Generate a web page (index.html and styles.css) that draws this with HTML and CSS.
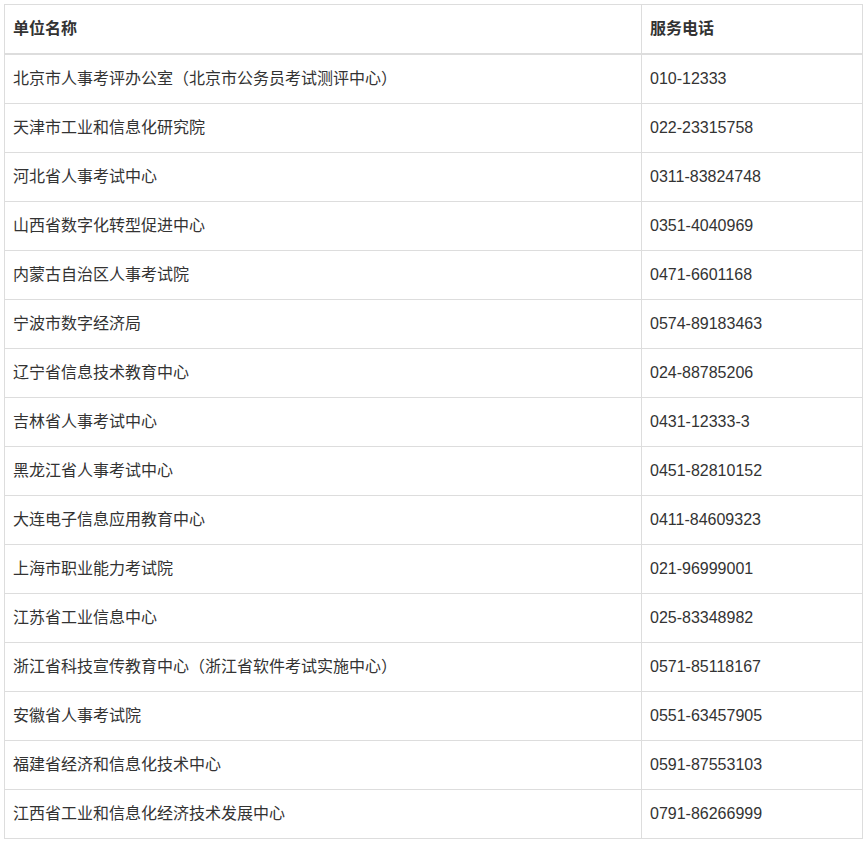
FILE: index.html
```html
<!DOCTYPE html>
<html lang="zh-CN">
<head>
<meta charset="utf-8">
<title>服务电话</title>
<link rel="stylesheet" href="styles.css">
</head>
<body>
<div class="wrap">
<table class="contacts">
<thead>
<tr><th class="name">单位名称</th><th class="phone">服务电话</th></tr>
</thead>
<tbody>
<tr><td>北京市人事考评办公室（北京市公务员考试测评中心）</td><td>010-12333</td></tr>
<tr><td>天津市工业和信息化研究院</td><td>022-23315758</td></tr>
<tr><td>河北省人事考试中心</td><td>0311-83824748</td></tr>
<tr><td>山西省数字化转型促进中心</td><td>0351-4040969</td></tr>
<tr><td>内蒙古自治区人事考试院</td><td>0471-6601168</td></tr>
<tr><td>宁波市数字经济局</td><td>0574-89183463</td></tr>
<tr><td>辽宁省信息技术教育中心</td><td>024-88785206</td></tr>
<tr><td>吉林省人事考试中心</td><td>0431-12333-3</td></tr>
<tr><td>黑龙江省人事考试中心</td><td>0451-82810152</td></tr>
<tr><td>大连电子信息应用教育中心</td><td>0411-84609323</td></tr>
<tr><td>上海市职业能力考试院</td><td>021-96999001</td></tr>
<tr><td>江苏省工业信息中心</td><td>025-83348982</td></tr>
<tr><td>浙江省科技宣传教育中心（浙江省软件考试实施中心）</td><td>0571-85118167</td></tr>
<tr><td>安徽省人事考试院</td><td>0551-63457905</td></tr>
<tr><td>福建省经济和信息化技术中心</td><td>0591-87553103</td></tr>
<tr><td>江西省工业和信息化经济技术发展中心</td><td>0791-86266999</td></tr>
</tbody>
</table>
</div>
</body>
</html>
```
FILE: styles.css
```css
html, body {
  margin: 0;
  padding: 0;
  background: #fff;
}
.wrap {
  padding: 4px 0 0 4px;
}
.contacts {
  width: 859px;
  border-collapse: collapse;
  border: 1px solid #ddd;
  font-family: "Liberation Sans", "Noto Sans CJK SC", sans-serif;
  font-size: 16px;
  color: #333;
  table-layout: fixed;
}
.contacts th,
.contacts td {
  border: 1px solid #ddd;
  padding: 14px 8px;
  line-height: 20px;
  text-align: left;
  vertical-align: middle;
}
.contacts th {
  font-weight: bold;
  padding-top: 14px;
  padding-bottom: 14px;
  border-bottom: 2px solid #ddd;
}
.contacts .name {
  width: 620px;
}
```
